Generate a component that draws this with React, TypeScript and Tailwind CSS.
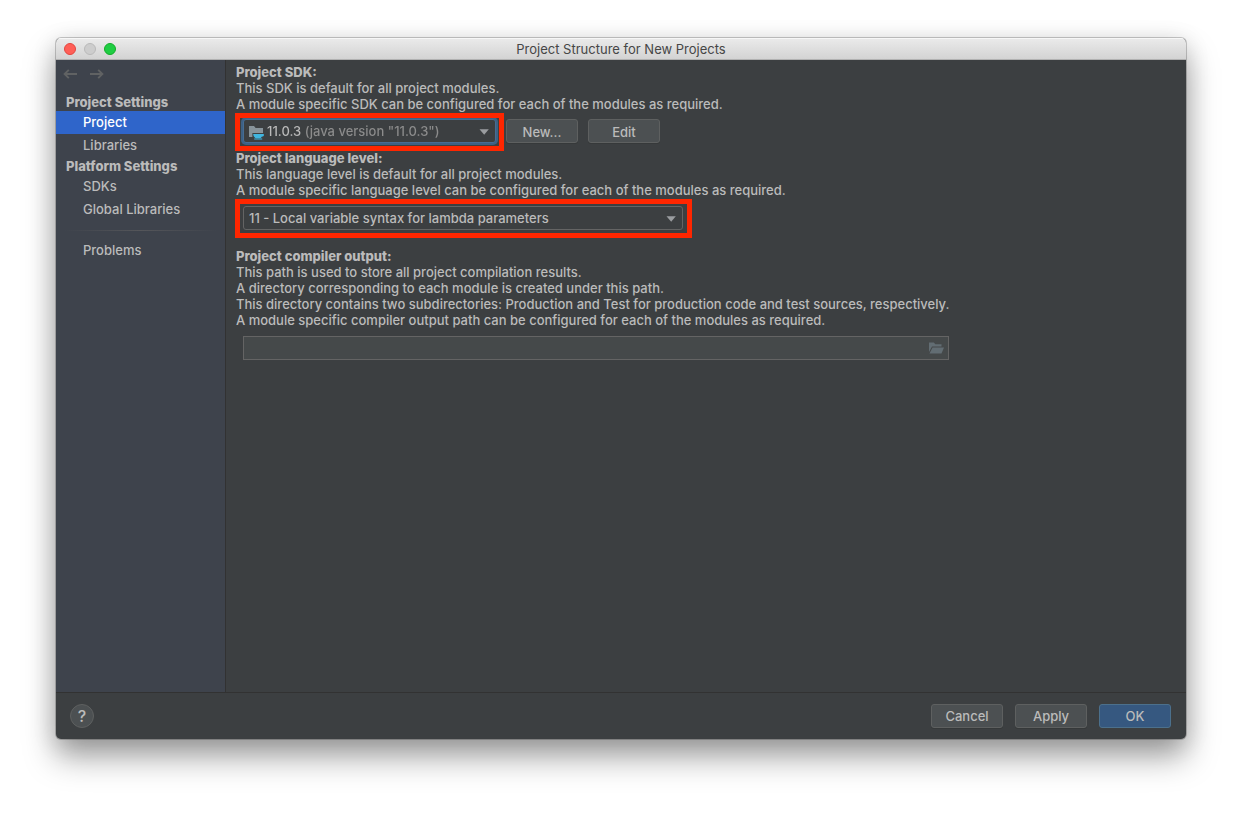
import type { ReactNode } from "react";

function NavArrow({ label, flip }: { label: string; flip?: boolean }) {
  return (
    <button type="button" aria-label={label} className="flex h-4 w-4 items-center justify-center text-[#606263]">
      <svg viewBox="0 0 16 16" className="h-4 w-4" fill="none" stroke="currentColor" strokeWidth="1.9">
        {flip ? (
          <path d="M1 8h12.500M9.200 3.800L13.400 8L9.200 12.200" />
        ) : (
          <path d="M14 8H1.500M5.800 3.800L1.600 8L5.800 12.200" />
        )}
      </svg>
    </button>
  );
}

function SidebarHeading({ children }: { children: ReactNode }) {
  return <h2 className="h-[18px] pl-2.5 font-extrabold leading-[18px]">{children}</h2>;
}

function SidebarItem({ children, active }: { children: ReactNode; active?: boolean }) {
  return (
    <a
      href="#"
      aria-current={active ? "page" : undefined}
      className={
        active
          ? "block h-[23px] bg-[#2f65ca] pl-[27px] font-medium leading-[23px] text-white"
          : "block h-[23px] pl-[27px] font-medium leading-[23px]"
      }
    >
      {children}
    </a>
  );
}

function PushButton({ children, primary }: { children: ReactNode; primary?: boolean }) {
  return (
    <button
      type="button"
      className={
        primary
          ? "h-6 w-[72px] rounded-[3px] border border-[#4c708c] bg-[#365880] pt-px font-medium text-[#bbbbbb]"
          : "h-6 w-[72px] rounded-[3px] border border-[#5e6060] bg-[#4c5052] pt-px font-medium text-[#bbbbbb] shadow-[0_1px_0_#36393a]"
      }
    >
      {children}
    </button>
  );
}

function Caret() {
  return (
    <svg viewBox="0 0 10 6" className="pointer-events-none absolute top-[9px] right-[6px] h-[6px] w-[10px]" fill="#9a9da0">
      <path d="M0.500 0.300h9.300L5.200 5.700z" />
    </svg>
  );
}

function SdkIcon() {
  return (
    <svg viewBox="0 0 16 16" className="pointer-events-none absolute top-[4px] left-[4px] h-4 w-4">
      <path d="M1 2h5l1.600 2H15v5H4.400v4H1z" fill="#87939a" />
      <path
        d="M5.200 10H15.200c.5 0 .8.300.8.800c0 1.200-.9 2-2.300 2c-.4.700-.9 1.200-1.500 1.400H8.200C6.200 13.500 5.200 12 5.200 10z"
        fill="#40b6e0"
      />
      <path d="M6.200 14.400h8v1.100h-8z" fill="#40b6e0" />
    </svg>
  );
}

function Highlight({ className }: { className: string }) {
  return <span aria-hidden="true" className={`pointer-events-none absolute border-[5px] border-[#ff2600] ${className}`} />;
}

export default function App() {
  return (
    <div className="flex min-h-screen flex-col bg-white px-14 pt-[38px] pb-[74px] font-['Inter',sans-serif] text-[13px] text-[#bbbbbb]">
      <div className="flex flex-1 flex-col overflow-hidden rounded-[5px] bg-[#3c3f41] shadow-[0_0_0_1px_rgba(0,0,0,0.2),0_18px_32px_rgba(0,0,0,0.36),0_4px_24px_rgba(0,0,0,0.14)]">
        <header className="relative flex h-[22px] items-center justify-center border-b border-[#b1b1b1] bg-linear-to-b from-[#ebebeb] to-[#d3d3d3] shadow-[inset_0_1px_0_#f7f7f7]">
          <div className="absolute left-2 flex gap-2">
            <button type="button" aria-label="Close" className="h-3 w-3 rounded-full border border-[#e2463f] bg-[#ff5f57]" />
            <button type="button" aria-label="Minimize" className="h-3 w-3 rounded-full border border-[#b9b9b9] bg-[#cdcdcd]" />
            <button type="button" aria-label="Zoom" className="h-3 w-3 rounded-full border border-[#12ac28] bg-[#1fcd43]" />
          </div>
          <h1 className="pt-0.5 text-[#464646]">Project Structure for New Projects</h1>
        </header>

        <div className="flex flex-1">
          <aside className="w-[170px] shrink-0 border-r border-[#323232] bg-[#3e434c]">
            <div className="flex h-[33px] gap-2.5 pt-1.5 pl-[7px]">
              <NavArrow label="Back" />
              <NavArrow label="Forward" flip />
            </div>
            <nav>
              <SidebarHeading>Project Settings</SidebarHeading>
              <SidebarItem active>Project</SidebarItem>
              <SidebarItem>Libraries</SidebarItem>
              <SidebarHeading>Platform Settings</SidebarHeading>
              <SidebarItem>SDKs</SidebarItem>
              <SidebarItem>Global Libraries</SidebarItem>
              <div className="mx-2 mt-[9px] mb-2 h-px bg-linear-to-r from-transparent via-[#55565a] to-transparent" />
              <SidebarItem>Problems</SidebarItem>
            </nav>
          </aside>

          <main className="min-w-0 flex-1 pt-1 pl-2.5 font-medium leading-4">
            <section>
              <label htmlFor="sdk" className="block font-extrabold">Project SDK:</label>
              <p>This SDK is default for all project modules.</p>
              <p>A module specific SDK can be configured for each of the modules as required.</p>
              <div className="relative flex h-[38px] items-center gap-2.5 pl-[7px]">
                <div className="relative h-6 w-[253px] rounded-[3px] border border-[#466d94] bg-[#3c3f41] ring-2 ring-[#3d6185]">
                  <select
                    id="sdk"
                    className="block h-full w-full appearance-none bg-[linear-gradient(to_right,#bbbbbb_60px,#8c8c8c_60px)] bg-clip-text pl-[23px] text-transparent outline-none"
                  >
                    <option className="text-black">11.0.3 (java version "11.0.3")</option>
                  </select>
                  <SdkIcon />
                  <Caret />
                </div>
                <PushButton>New...</PushButton>
                <PushButton>Edit</PushButton>
                <Highlight className="top-px -left-px h-[38px] w-[269px]" />
              </div>
            </section>

            <section>
              <label htmlFor="level" className="block font-extrabold">Project language level:</label>
              <p>This language level is default for all project modules.</p>
              <p>A module specific language level can be configured for each of the modules as required.</p>
              <div className="relative h-[50px] pt-2 pl-[7px]">
                <div className="relative h-6 w-[440px] rounded-[3px] border border-[#646464]">
                  <select id="level" className="block h-full w-full appearance-none bg-transparent pl-[5px] outline-none">
                    <option className="text-black">11 - Local variable syntax for lambda parameters</option>
                  </select>
                  <Caret />
                </div>
                <Highlight className="top-px -left-px h-[39px] w-[457px]" />
              </div>
            </section>

            <section>
              <label htmlFor="output" className="block font-extrabold">Project compiler output:</label>
              <p>This path is used to store all project compilation results.</p>
              <p>A directory corresponding to each module is created under this path.</p>
              <p>This directory contains two subdirectories: Production and Test for production code and test sources, respectively.</p>
              <p>A module specific compiler output path can be configured for each of the modules as required.</p>
              <div className="mt-2 ml-[7px] flex h-6 w-[706px] items-center border border-[#646464] bg-[#45494a]">
                <input id="output" type="text" className="h-full min-w-0 flex-1 bg-transparent px-1.5 outline-none" />
                <button type="button" aria-label="Browse" className="mr-1 h-4 w-4">
                  <svg viewBox="0 0 16 16" className="h-4 w-4" fill="#626d73">
                    <path d="M1 2.500h4.800l1.500 1.800H13.500v2.200H4L1 12z" />
                    <path d="M4.600 7.500H16L13.500 13.500H1.500z" />
                  </svg>
                </button>
              </div>
            </section>
          </main>
        </div>

        <footer className="flex h-[47px] items-center justify-between border-t border-[#323232] pr-[15px] pl-3.5">
          <button
            type="button"
            aria-label="Help"
            className="flex h-6 w-6 items-center justify-center rounded-full border border-[#5e6060] bg-[#4c5052] text-base font-medium text-[#bbbbbb]"
          >
            ?
          </button>
          <div className="flex gap-3">
            <PushButton>Cancel</PushButton>
            <PushButton>Apply</PushButton>
            <PushButton primary>OK</PushButton>
          </div>
        </footer>
      </div>
    </div>
  );
}
